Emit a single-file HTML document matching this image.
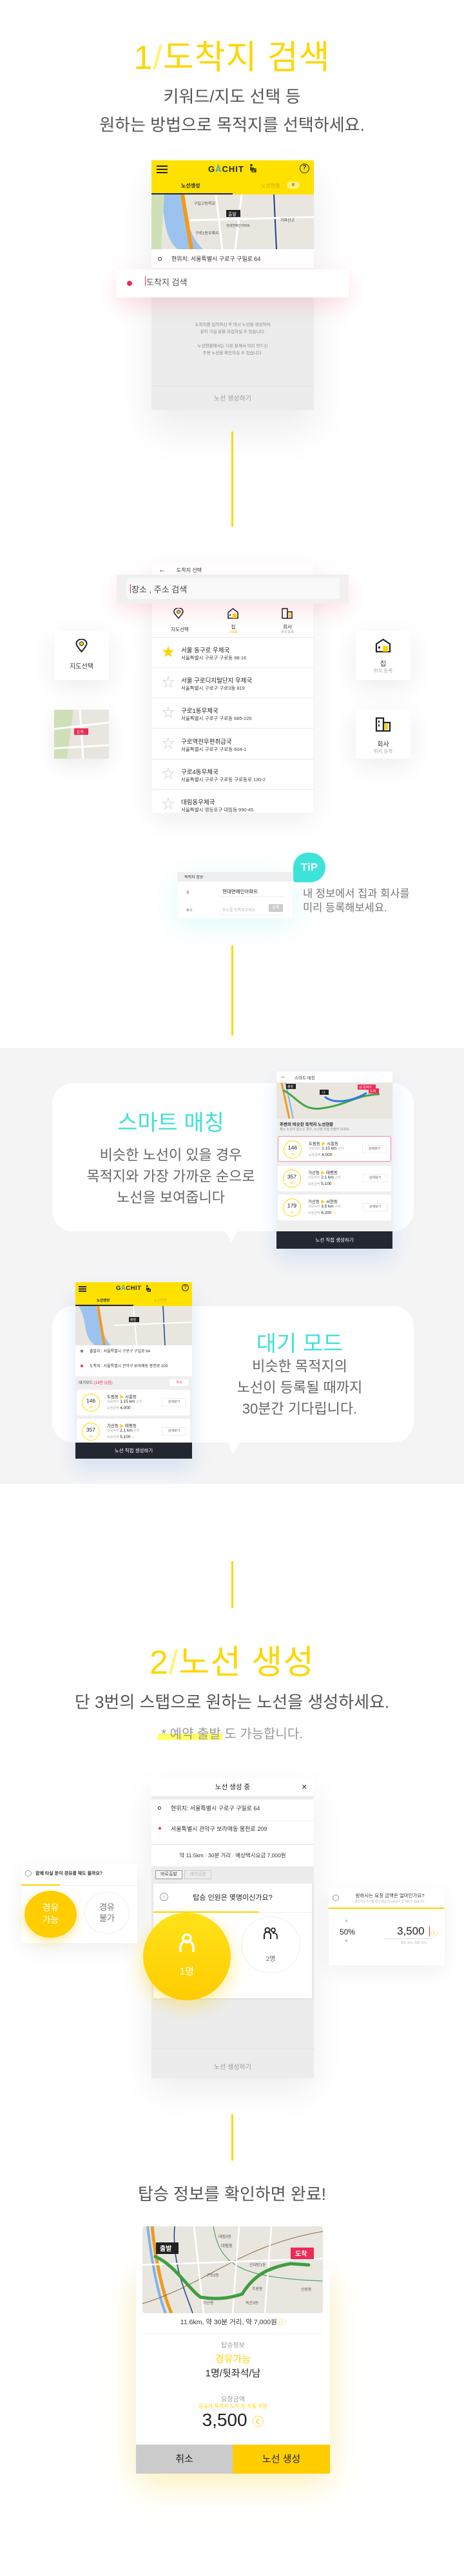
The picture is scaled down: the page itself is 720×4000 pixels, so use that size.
<!DOCTYPE html>
<html><head><meta charset="utf-8">
<style>
*{margin:0;padding:0;box-sizing:border-box}
body{width:720px;height:4000px;position:relative;background:#fff;font-family:"Liberation Sans","Noto Sans CJK KR",sans-serif;overflow:hidden;color:#333}
.a{position:absolute}
.c{text-align:center}
.title{position:absolute;left:0;width:720px;text-align:center;color:#ffd600;font-size:52px;line-height:60px;letter-spacing:1px}
.title .s{color:#fff36b}
.sub{position:absolute;left:0;width:720px;text-align:center;color:#555;font-size:26px;line-height:44px}
.vl{position:absolute;left:359px;width:3px;background:#ffd800}
.map{position:absolute;background:#e9e6e0;overflow:hidden}
.shadow{box-shadow:0 10px 40px rgba(0,0,0,.08)}
.ylw{background:#ffe100}
.item{position:absolute;left:0;width:250px;height:47px;border-bottom:2px solid #f2f2f2;background:#fff}
.item .n{position:absolute;left:45px;top:11px;font-size:9.5px;color:#222}
.item .d{position:absolute;left:45px;top:25px;font-size:7.5px;color:#444}
.item .st{position:absolute;left:15px;top:12px;font-size:20px;color:#ccc;line-height:20px}
.card{position:absolute;background:#fff}
.rc{position:absolute;left:2px;width:176px;height:40px;background:#fff;border-radius:3px}
.rc .cir{position:absolute;left:8px;top:6px;width:28px;height:28px;border:1.5px solid #ffd800;border-radius:50%;font-size:8.5px;text-align:center;line-height:11px;padding-top:5px;color:#222}
.rc .cir i{display:block;font-style:normal;color:#ffc800;font-size:6px}
.rc .t1{position:absolute;left:47px;top:5px;font-size:6.5px;color:#222}
.rc .t2{position:absolute;left:47px;top:15px;font-size:6.5px;color:#222}
.rc .t3{position:absolute;left:47px;top:25px;font-size:6.5px;color:#222}
.rc .t2 span,.rc .t3 span{color:#aaa;font-size:5px}
.rc .b{position:absolute;right:6px;top:13px;width:38px;height:13px;border:1px solid #eee;font-size:5px;text-align:center;line-height:11px;color:#555}
.bubble{position:absolute;background:#fff;border-radius:32px}
</style></head><body>

<!-- ===== Section 1 ===== -->
<div class="title" style="top:60px">1<span class="s">/</span>도착지 검색</div>
<div class="sub" style="top:128px">키워드/지도 선택 등<br>원하는 방법으로 목적지를 선택하세요.</div>

<div class="a shadow" style="left:235px;top:249px;width:252px;height:388px;background:#ececec;box-shadow:0 30px 60px rgba(0,0,0,.08)">
  <div class="a ylw" style="left:0;top:0;width:252px;height:53px"></div>
  <div class="a" style="left:8px;top:8px;width:17px;height:2px;background:#222;box-shadow:0 5px 0 #222,0 10px 0 #222"></div>
  <div class="a" style="left:88px;top:6px;font-size:13px;font-weight:bold;letter-spacing:1px;color:#222">G<span style="color:#3aa0e0">Å</span>CHIT</div>
  <svg class="a" style="left:152px;top:5px" width="12" height="14"><circle cx="3" cy="2.5" r="1.8" fill="#222"/><path d="M2 5 L2 10 L8 10 L10 13 M2 7 L7 7" stroke="#222" stroke-width="1.6" fill="none"/><rect x="4" y="8" width="6" height="5" fill="none" stroke="#222" stroke-width="1.2"/></svg>
  <div class="a" style="left:230px;top:5px;width:15px;height:15px;border:1.6px solid #222;border-radius:50%;font-size:10px;text-align:center;line-height:12px;font-weight:bold;color:#222">?</div>
  <div class="a" style="left:46px;top:34px;font-size:8px;font-weight:bold;color:#222">노선생성</div>
  <div class="a" style="left:0;top:51px;width:126px;height:2px;background:#222"></div>
  <div class="a" style="left:170px;top:34px;font-size:8px;color:#c9a800">노선현황</div>
  <div class="a" style="left:210px;top:33px;width:20px;height:11px;border-radius:6px;background:#fff07a;font-size:7px;text-align:center;line-height:11px">8</div>
  <div class="map" style="left:0;top:53px;width:252px;height:85px">
    <svg width="252" height="85"><path d="M10 0 C25 30 15 60 40 85 L80 85 C55 60 55 30 45 0Z" fill="#9cc3ef"/><path d="M0 0 L20 0 L15 85 L0 85Z" fill="#cfe0b8"/><path d="M48 0 L62 85" stroke="#f29a1c" stroke-width="6"/><path d="M190 0 L194 85" stroke="#1c3f8a" stroke-width="2"/><path d="M100 0 L110 85 M60 40 L252 35 M140 0 L130 85" stroke="#fff" stroke-width="3"/><rect x="116" y="24" width="22" height="11" fill="#222"/><text x="119" y="33" font-size="7" fill="#fff">출발</text><text x="66" y="16" font-size="6" fill="#444">구일고등학교</text><text x="68" y="62" font-size="6" fill="#444">구로1동우체국</text><text x="116" y="50" font-size="5" fill="#444">현대연예인아파트</text><text x="200" y="42" font-size="6" fill="#444">가마산고</text></svg>
  </div>
  <div class="a" style="left:0;top:138px;width:252px;height:30px;background:#fff"></div>
  <div class="a" style="left:10px;top:150px;width:6px;height:6px;border:1.3px solid #333;border-radius:50%"></div>
  <div class="a" style="left:31px;top:146px;font-size:9px;color:#333">현위치: 서울특별시 구로구 구일로 64</div>
  <div class="a c" style="left:0;top:250px;width:252px;font-size:6.5px;line-height:11px;color:#888">도착지를 입력하신 후 택시 노선을 생성하여<br>같이 가실 분을 모집하실 수 있습니다.<br><br>노선현황에서는 다른 분께서 이미 만드신<br>주변 노선을 확인하실 수 있습니다.</div>
  <div class="a" style="left:0;top:350px;width:252px;height:1px;background:#ddd"></div>
  <div class="a c" style="left:0;top:361px;width:252px;font-size:10px;color:#999">노선 생성하기</div>
</div>
<div class="a" style="left:181px;top:418px;width:360px;height:44px;background:#fff;box-shadow:0 12px 30px rgba(255,80,110,.18)">
  <div class="a" style="left:16px;top:18px;width:8px;height:8px;border-radius:50%;background:#ee2a55"></div>
  <div class="a" style="left:44px;top:11px;width:1px;height:15px;background:#ee2a55"></div>
  <div class="a" style="left:46px;top:10px;font-size:13px;color:#555">도착지 검색</div>
</div>
<div class="vl" style="top:670px;height:148px"></div>

<!-- ===== Section 1b ===== -->
<div class="a" style="left:236px;top:875px;width:250px;height:387px;background:#fff;box-shadow:0 10px 40px rgba(0,0,0,.07);overflow:hidden">
  <div class="a" style="left:10px;top:4px;font-size:11px;color:#222">←</div>
  <div class="a" style="left:38px;top:5px;font-size:8px;color:#333">도착지 선택</div>
  <div class="a" style="left:0;top:63px;width:250px;height:53px;border-bottom:2px solid #f2f2f2"></div>
  <svg class="a" style="left:33px;top:69px" width="16" height="18"><path d="M8 16 C3 10 1 8 1 6 A7 6 0 0 1 15 6 C15 8 13 10 8 16Z" fill="none" stroke="#222" stroke-width="1.6"/><circle cx="8" cy="6" r="2.5" fill="#ffd400" stroke="#222"/></svg>
  <div class="a c" style="left:18px;top:97px;width:50px;font-size:7.5px;color:#333">지도선택</div>
  <svg class="a" style="left:116px;top:68px" width="19" height="18"><path d="M2 8 L9.5 2 L17 8 L17 17 L2 17Z" fill="none" stroke="#222" stroke-width="1.6"/><rect x="9" y="10" width="6" height="7" fill="#ffd400"/><rect x="4" y="11" width="2" height="2" fill="#222"/></svg>
  <div class="a c" style="left:101px;top:93px;width:50px;font-size:7.5px;color:#333">집</div>
  <div class="a c" style="left:101px;top:103px;width:50px;font-size:5px;color:#f0b800">구로동</div>
  <svg class="a" style="left:200px;top:68px" width="19" height="18"><rect x="2" y="2" width="8" height="15" fill="none" stroke="#222" stroke-width="1.6"/><rect x="10" y="7" width="7" height="10" fill="none" stroke="#222" stroke-width="1.6"/><rect x="12" y="9" width="3" height="6" fill="#ffd400"/></svg>
  <div class="a c" style="left:185px;top:93px;width:50px;font-size:7.5px;color:#333">회사</div>
  <div class="a c" style="left:185px;top:103px;width:50px;font-size:5px;color:#999">위치 등록</div>
  <div class="item" style="top:116px"><div class="st" style="color:#ffd200">★</div><div class="n">서울 동구로 우체국</div><div class="d">서울특별시 구로구 구로동 98-16</div></div>
  <div class="item" style="top:163px"><div class="st">☆</div><div class="n">서울 구로디지털단지 우체국</div><div class="d">서울특별시 구로구 구로3동 819</div></div>
  <div class="item" style="top:210px"><div class="st">☆</div><div class="n">구로1동우체국</div><div class="d">서울특별시 구로구 구로동 685-220</div></div>
  <div class="item" style="top:258px"><div class="st">☆</div><div class="n">구로역전우편취급국</div><div class="d">서울특별시 구로구 구로동 604-1</div></div>
  <div class="item" style="top:305px"><div class="st">☆</div><div class="n">구로4동우체국</div><div class="d">서울특별시 구로구 구로동 구로동로 130-2</div></div>
  <div class="item" style="top:352px"><div class="st">☆</div><div class="n">대림동우체국</div><div class="d">서울특별시 영등포구 대림동 990-45</div></div>
</div>
<div class="a" style="left:181px;top:892px;width:360px;height:45px;background:#f0f0f0;box-shadow:0 12px 30px rgba(255,80,110,.16)">
  <div class="a" style="left:15px;top:6px;width:331px;height:32px;background:#f9f9f9;border-radius:4px"></div>
  <div class="a" style="left:21px;top:15px;width:1px;height:14px;background:#ee2a55"></div>
  <div class="a" style="left:23px;top:13px;font-size:13px;color:#444">장소 , 주소 검색</div>
</div>
<div class="card shadow" style="left:84px;top:980px;width:85px;height:76px">
  <svg class="a" style="left:33px;top:12px" width="19" height="22"><path d="M9.5 20 C4 13 1.5 10 1.5 7.5 A8 7 0 0 1 17.5 7.5 C17.5 10 15 13 9.5 20Z" fill="none" stroke="#222" stroke-width="2"/><circle cx="9.5" cy="7.5" r="3" fill="#ffd400" stroke="#222"/></svg>
  <div class="a c" style="left:0;top:46px;width:85px;font-size:10px;color:#333">지도선택</div>
</div>
<div class="map" style="left:84px;top:1102px;width:85px;height:76px;box-shadow:0 10px 30px rgba(0,0,0,.08)">
  <svg width="85" height="76"><path d="M0 0 L30 0 L20 76 L0 76Z" fill="#cfe0b8"/><path d="M0 30 L85 20 M40 0 L45 76 M0 60 L85 55" stroke="#fff" stroke-width="3"/><rect x="31" y="29" width="22" height="10" fill="#ee2a55"/><text x="35" y="37" font-size="6" fill="#fff">도착</text></svg>
</div>
<div class="card shadow" style="left:552px;top:980px;width:85px;height:76px">
  <svg class="a" style="left:30px;top:11px" width="25" height="22"><path d="M2 9 L12.5 2 L23 9 L23 21 L2 21Z" fill="none" stroke="#222" stroke-width="2.2"/><rect x="12" y="12" width="8" height="9" fill="#ffd400"/><rect x="5" y="13" width="3" height="3" fill="#222"/></svg>
  <div class="a c" style="left:0;top:42px;width:85px;font-size:10px;color:#333">집</div>
  <div class="a c" style="left:0;top:56px;width:85px;font-size:7.5px;color:#aaa">위치 등록</div>
</div>
<div class="card shadow" style="left:552px;top:1102px;width:85px;height:76px">
  <svg class="a" style="left:30px;top:11px" width="26" height="24"><rect x="2" y="2" width="11" height="20" fill="none" stroke="#222" stroke-width="2.2"/><rect x="13" y="9" width="10" height="13" fill="none" stroke="#222" stroke-width="2.2"/><rect x="15" y="11" width="5" height="9" fill="#ffd400"/><rect x="5" y="6" width="2" height="3" fill="#222"/><rect x="5" y="12" width="2" height="3" fill="#222"/></svg>
  <div class="a c" style="left:0;top:45px;width:85px;font-size:10px;color:#333">회사</div>
  <div class="a c" style="left:0;top:59px;width:85px;font-size:7.5px;color:#aaa">위치 등록</div>
</div>
<div class="a" style="left:275px;top:1354px;width:179px;height:72px;background:#fff;box-shadow:0 10px 40px rgba(60,230,220,.18)">
  <div class="a" style="left:0;top:0;width:179px;height:15px;background:#efefef"></div>
  <div class="a" style="left:11px;top:3px;font-size:6px;color:#333">목적지 정보</div>
  <div class="a" style="left:14px;top:28px;font-size:5px;color:#555">집</div>
  <div class="a" style="left:70px;top:25px;font-size:7.5px;color:#222">현대연예인아파트</div>
  <div class="a" style="left:64px;top:38px;width:100px;height:1px;background:#eee"></div>
  <div class="a" style="left:14px;top:56px;font-size:5px;color:#555">회사</div>
  <div class="a" style="left:70px;top:54px;font-size:6px;color:#bbb">주소를 등록해주세요</div>
  <div class="a" style="left:142px;top:50px;width:22px;height:12px;background:#ccc;font-size:6px;color:#fff;text-align:center;line-height:12px">등록</div>
  <div class="a" style="left:64px;top:66px;width:100px;height:1px;background:#eee"></div>
</div>
<div class="a" style="left:455px;top:1324px;width:50px;height:46px;background:#3de3d8;border-radius:24px 24px 24px 4px;color:#fff;font-size:17px;font-weight:bold;text-align:center;line-height:46px">TiP</div>
<div class="a" style="left:470px;top:1377px;font-size:16.5px;line-height:22px;color:#777">내 정보에서 집과 회사를<br>미리 등록해보세요.</div>
<div class="vl" style="top:1468px;height:140px"></div>

<!-- ===== Section gray ===== -->
<div class="a" style="left:0;top:1627px;width:720px;height:677px;background:#f4f4f5"></div>
<div class="bubble" style="left:81px;top:1682px;width:561px;height:230px"></div>
<div class="a" style="left:349px;top:1910px;width:0;height:0;border-left:10px solid transparent;border-right:10px solid transparent;border-top:20px solid #fff"></div>
<div class="a c" style="left:115px;top:1716px;width:300px;font-size:34px;color:#3fe0d8">스마트 매칭</div>
<div class="a c" style="left:115px;top:1777px;width:300px;font-size:22px;line-height:33px;color:#666">비슷한 노선이 있을 경우<br>목적지와 가장 가까운 순으로<br>노선을 보여줍니다</div>

<div class="a" style="left:429px;top:1664px;width:180px;height:275px;background:#efefef;box-shadow:0 16px 30px rgba(90,150,230,.2)">
  <div class="a" style="left:0;top:0;width:180px;height:17px;background:#fff"></div>
  <div class="a" style="left:6px;top:2px;font-size:9px;color:#222">←</div>
  <div class="a" style="left:28px;top:4px;font-size:6.5px;color:#444">스마트 매칭</div>
  <div class="map" style="left:0;top:17px;width:180px;height:56px">
    <svg width="180" height="56"><path d="M8 0 L20 56" stroke="#f29a1c" stroke-width="3"/><path d="M14 0 L26 56" stroke="#7fb3ea" stroke-width="2"/><path d="M10 12 C30 20 40 45 70 40 C110 35 120 20 160 18" stroke="#44a646" stroke-width="3" fill="none"/><path d="M75 22 C90 35 120 28 140 16" stroke="#2d78e8" stroke-width="3" fill="none"/><rect x="15" y="2" width="15" height="8" fill="#222"/><text x="17" y="8" font-size="5" fill="#fff">출발</text><rect x="67" y="11" width="14" height="8" fill="#222"/><text x="71" y="17" font-size="5" fill="#fff">나</text><rect x="126" y="3" width="28" height="8" fill="#ee2a55"/><text x="128" y="9" font-size="5" fill="#fff">내 목적지</text><rect x="143" y="9" width="16" height="8" fill="#ee2a55"/><text x="145" y="15" font-size="5" fill="#fff">도착</text></svg>
  </div>
  <div class="a" style="left:5px;top:76px;font-size:6.5px;font-weight:bold;color:#222">주변의 비슷한 목적지 노선현황</div>
  <div class="a" style="left:5px;top:86px;font-size:5px;color:#888">찾는 노선이 없으신 경우, 노선을 직접 만들어 보세요.</div>
  <div class="rc" style="top:100px;border:1px solid #f58aa3"><div class="cir">146<i>m</i></div><div class="t1">도림동 <span style="color:#ffc800">▶</span> 시흥동</div><div class="t2"><span>내목적지</span> 1.15 km <span>근처</span></div><div class="t3"><span>요청금액</span> 4,000 <span style="color:#ffc800">ⓒ</span></div><div class="b">상세보기</div></div>
  <div class="rc" style="top:146px"><div class="cir">357<i>m</i></div><div class="t1">가산동 <span style="color:#ffc800">▶</span> 태평동</div><div class="t2"><span>내목적지</span> 2.1 km <span>근처</span></div><div class="t3"><span>요청금액</span> 5,100 <span style="color:#ffc800">ⓒ</span></div><div class="b">상세보기</div></div>
  <div class="rc" style="top:191px"><div class="cir">179<i>m</i></div><div class="t1">가산동 <span style="color:#ffc800">▶</span> 서현동</div><div class="t2"><span>내목적지</span> 3.5 km <span>근처</span></div><div class="t3"><span>요청금액</span> 6,200 <span style="color:#ffc800">ⓒ</span></div><div class="b">상세보기</div></div>
  <div class="a c" style="left:0;top:248px;width:180px;height:27px;background:#232830;color:#fff;font-size:7.5px;line-height:27px">노선 직접 생성하기</div>
</div>

<div class="bubble" style="left:81px;top:2028px;width:561px;height:212px"></div>
<div class="a" style="left:352px;top:2238px;width:0;height:0;border-left:10px solid transparent;border-right:10px solid transparent;border-top:20px solid #fff"></div>
<div class="a c" style="left:315px;top:2059px;width:300px;font-size:34px;color:#3fe0d8">대기 모드</div>
<div class="a c" style="left:315px;top:2105px;width:300px;font-size:22px;line-height:33px;color:#666">비슷한 목적지의<br>노선이 등록될 때까지<br>30분간 기다립니다.</div>

<div class="a" style="left:117px;top:1991px;width:181px;height:274px;background:#efefef;box-shadow:0 16px 30px rgba(90,150,230,.2);overflow:hidden">
  <div class="a ylw" style="left:0;top:0;width:181px;height:37px"></div>
  <div class="a" style="left:5px;top:6px;width:12px;height:1.5px;background:#222;box-shadow:0 3.5px 0 #222,0 7px 0 #222"></div>
  <div class="a" style="left:63px;top:4px;font-size:9.5px;font-weight:bold;color:#222;letter-spacing:.5px">G<span style="color:#3aa0e0">Å</span>CHIT</div>
  <svg class="a" style="left:109px;top:4px" width="9" height="11"><circle cx="2.3" cy="2" r="1.4" fill="#222"/><path d="M1.5 4 L1.5 8 L6 8 L7.5 10.5 M1.5 5.5 L5.5 5.5" stroke="#222" stroke-width="1.2" fill="none"/><rect x="3" y="6.5" width="4.5" height="4" fill="none" stroke="#222" stroke-width="1"/></svg>
  <div class="a" style="left:165px;top:3px;width:11px;height:11px;border:1.3px solid #222;border-radius:50%;font-size:7px;text-align:center;line-height:9px;font-weight:bold">?</div>
  <div class="a" style="left:33px;top:24px;font-size:5.5px;font-weight:bold;color:#222">노선생성</div>
  <div class="a" style="left:0;top:35px;width:90px;height:1.5px;background:#222"></div>
  <div class="a" style="left:122px;top:24px;font-size:5.5px;color:#c9a800">노선현황</div>
  <div class="map" style="left:0;top:37px;width:181px;height:61px">
    <svg width="181" height="61"><path d="M5 0 C20 25 10 45 30 61 L55 61 C40 45 40 25 32 0Z" fill="#9cc3ef"/><path d="M35 0 L45 61" stroke="#f29a1c" stroke-width="4"/><path d="M136 0 L139 61" stroke="#1c3f8a" stroke-width="1.5"/><path d="M60 30 L181 25 M90 0 L95 61" stroke="#fff" stroke-width="2"/><rect x="83" y="17" width="16" height="8" fill="#222"/><text x="85" y="23" font-size="5" fill="#fff">출발</text></svg>
  </div>
  <div class="a" style="left:0;top:98px;width:181px;height:48px;background:#fff"></div>
  <div class="a" style="left:8px;top:105px;width:4px;height:4px;border:1px solid #333;border-radius:50%"></div>
  <div class="a" style="left:22px;top:102px;font-size:6px;color:#333">출발지 : 서울특별시 구로구 구일로 64</div>
  <div class="a" style="left:8px;top:128px;width:4px;height:4px;background:#ee2a55;border-radius:50%"></div>
  <div class="a" style="left:22px;top:125px;font-size:6px;color:#333">도착지 : 서울특별시 관악구 보라매동 봉천로 209</div>
  <div class="a" style="left:5px;top:151px;font-size:6px;color:#333">대기모드 <span style="color:#ee2a55">(14분 남음)</span></div>
  <div class="a" style="left:146px;top:151px;width:30px;height:10px;background:#fff;font-size:5px;color:#ee2a55;text-align:center;line-height:10px">취소</div>
  <div class="rc" style="top:167px;left:2px"><div class="cir">146<i>m</i></div><div class="t1">도림동 <span style="color:#ffc800">▶</span> 시흥동</div><div class="t2"><span>내목적지</span> 1.15 km <span>근처</span></div><div class="t3"><span>요청금액</span> 4,000 <span style="color:#ffc800">ⓒ</span></div><div class="b">상세보기</div></div>
  <div class="rc" style="top:212px;left:2px"><div class="cir">357<i>m</i></div><div class="t1">가산동 <span style="color:#ffc800">▶</span> 태평동</div><div class="t2"><span>내목적지</span> 2.1 km <span>근처</span></div><div class="t3"><span>요청금액</span> 5,100 <span style="color:#ffc800">ⓒ</span></div><div class="b">상세보기</div></div>
  <div class="a c" style="left:0;top:249px;width:181px;height:25px;background:#232830;color:#fff;font-size:7.5px;line-height:25px">노선 직접 생성하기</div>
</div>

<!-- ===== Section 2 ===== -->
<div class="vl" style="top:2424px;height:73px"></div>
<div class="title" style="top:2552px">2<span class="s">/</span>노선 생성</div>
<div class="sub" style="top:2621px">단 3번의 스탭으로 원하는 노선을 생성하세요.</div>
<div class="a" style="left:245px;top:2692px;width:100px;height:10px;background:#ffff66"></div>
<div class="a c" style="left:0;top:2676px;width:720px;font-size:20px;color:#999">* 예약 출발 도 가능합니다.</div>

<div class="a" style="left:235px;top:2761px;width:252px;height:466px;background:#ececec;box-shadow:0 20px 50px rgba(0,0,0,.07)">
  <div class="a c" style="left:0;top:0;width:252px;height:28px;background:#fff;font-size:10.5px;line-height:28px;color:#222">노선 생성 중</div>
  <div class="a" style="left:233px;top:5px;font-size:14px;color:#222">×</div>
  <div class="a" style="left:0;top:33px;width:252px;height:69px;background:#fff"></div>
  <div class="a" style="left:10px;top:44px;width:5px;height:5px;border:1.2px solid #333;border-radius:50%"></div>
  <div class="a" style="left:30px;top:40px;font-size:9px;color:#333">현위치: 서울특별시 구로구 구일로 64</div>
  <div class="a" style="left:28px;top:66px;width:224px;height:1px;background:#f0f0f0"></div>
  <div class="a" style="left:11px;top:76px;width:4px;height:4px;background:#ee2a55;border-radius:50%"></div>
  <div class="a" style="left:30px;top:72px;font-size:9px;color:#333">서울특별시 관악구 보라매동 봉천로 209</div>
  <div class="a c" style="left:0;top:104px;width:252px;height:33px;background:#fff;font-size:8.5px;line-height:33px;color:#333">약 11.5km <span style="color:#ccc">/</span> 30분 거리 <span style="color:#ccc">/</span> 예상택시요금 7,000원</div>
  <div class="a" style="left:6px;top:143px;width:42px;height:14px;border:1px solid #999;background:#f5f5f5;font-size:7px;text-align:center;line-height:12px;color:#444">바로출발</div>
  <div class="a" style="left:51px;top:143px;width:42px;height:14px;border:1px solid #ccc;font-size:7px;text-align:center;line-height:12px;color:#bbb">예약출발</div>
  <div class="a" style="left:3px;top:164px;width:246px;height:178px;background:#fff;box-shadow:0 1px 3px rgba(0,0,0,.08)">
    <div class="a" style="left:10px;top:14px;width:13px;height:13px;border:1px solid #999;border-radius:50%;font-size:7px;text-align:center;line-height:11px;color:#666">‹</div>
    <div class="a c" style="left:0;top:13px;width:246px;font-size:11px;color:#222">탑승 인원은 몇명이신가요?</div>
    <div class="a" style="left:0;top:44px;width:246px;height:1px;background:#eee"></div>
    <div class="a" style="left:0;top:43px;width:164px;height:2px;background:#ffd200"></div>
    <div class="a" style="left:136px;top:51px;width:92px;height:88px;border:1px solid #eee;border-radius:50%"></div>
    <svg class="a" style="left:171px;top:67px" width="22" height="20"><circle cx="6" cy="5" r="3.5" fill="none" stroke="#222" stroke-width="2"/><path d="M1 19 L1 13 A5 5 0 0 1 11 13 L11 19" fill="none" stroke="#222" stroke-width="2"/><circle cx="15" cy="5" r="3" fill="none" stroke="#222" stroke-width="1.8"/><path d="M14 10 A5 5 0 0 1 21 14 L21 19" fill="none" stroke="#222" stroke-width="1.8"/></svg>
    <div class="a c" style="left:136px;top:108px;width:92px;font-size:10px;color:#666">2명</div>
  </div>
  <div class="a c" style="left:0;top:420px;width:252px;height:1px;background:#ddd"></div>
  <div class="a c" style="left:0;top:440px;width:252px;font-size:10px;color:#999">노선 생성하기</div>
</div>
<div class="a" style="left:222px;top:2970px;width:136px;height:136px;border-radius:50%;background:linear-gradient(#ffe21a,#ffcc00);box-shadow:0 10px 30px rgba(255,210,0,.4)">
  <svg class="a" style="left:55px;top:32px" width="26" height="30"><circle cx="13" cy="8" r="6" fill="none" stroke="#fff" stroke-width="3.5"/><path d="M3 29 L3 21 A10 9 0 0 1 23 21 L23 29" fill="none" stroke="#fff" stroke-width="3.5"/></svg>
  <div class="a c" style="left:0;top:80px;width:136px;font-size:15px;color:#fff">1명</div>
</div>
<div class="a" style="left:33px;top:2895px;width:180px;height:122px;background:#fff;box-shadow:0 10px 30px rgba(0,0,0,.06)">
  <div class="a" style="left:6px;top:9px;width:10px;height:10px;border:1px solid #999;border-radius:50%"></div>
  <div class="a" style="left:22px;top:9px;font-size:7px;font-weight:bold;color:#333">함께 타실 분이 경유를 해도 될까요?</div>
  <div class="a" style="left:0;top:32px;width:180px;height:1px;background:#eee"></div>
  <div class="a" style="left:0;top:31px;width:60px;height:2px;background:#ffd200"></div>
  <div class="a" style="left:5px;top:41px;width:81px;height:73px;border-radius:50%;background:#ffcd00;box-shadow:0 6px 16px rgba(255,200,0,.4);color:#fff;font-size:14px;text-align:center;line-height:19px;padding-top:17px">경유<br>가능</div>
  <div class="a" style="left:98px;top:43px;width:70px;height:65px;border-radius:50%;border:1px solid #eee;color:#777;font-size:13px;text-align:center;line-height:17px;padding-top:14px">경유<br>불가</div>
</div>
<div class="a" style="left:510px;top:2931px;width:180px;height:121px;background:#fff;box-shadow:0 10px 30px rgba(0,0,0,.06)">
  <div class="a" style="left:6px;top:11px;width:10px;height:10px;border:1px solid #999;border-radius:50%"></div>
  <div class="a c" style="left:10px;top:7px;width:170px;font-size:7.5px;color:#333">원하시는 요청 금액은 얼마인가요?</div>
  <div class="a c" style="left:10px;top:19px;width:170px;font-size:4.5px;color:#aaa">경유지가 추가될 경우 예상 택시요금이 증가될 수 있습니다.</div>
  <div class="a" style="left:0;top:31px;width:180px;height:2px;background:#ffd200"></div>
  <div class="a" style="left:24px;top:48px;font-size:7px;color:#bbb">▲</div>
  <div class="a" style="left:17px;top:62px;font-size:12px;color:#222">50%</div>
  <div class="a" style="left:24px;top:80px;font-size:7px;color:#bbb">▼</div>
  <div class="a" style="left:106px;top:58px;font-size:17px;color:#222">3,500</div>
  <div class="a" style="left:156px;top:60px;width:1px;height:16px;background:#ee2a55"></div>
  <div class="a" style="left:159px;top:63px;font-size:10px;color:#ffc800">ⓒ</div>
  <div class="a" style="left:85px;top:79px;width:75px;height:1px;background:#ddd"></div>
  <div class="a" style="left:112px;top:83px;font-size:4.5px;color:#aaa">최소 40%, 최대 70%</div>
</div>

<div class="vl" style="top:3283px;height:72px"></div>
<div class="a c" style="left:0;top:3387px;width:720px;font-size:26px;color:#555">탑승 정보를 확인하면 완료!</div>

<div class="a" style="left:211px;top:3525px;width:301px;height:316px;background:#fff;box-shadow:0 20px 50px rgba(255,215,0,.25),0 0 40px rgba(0,0,0,.04)"></div>
<div class="map" style="left:221px;top:3457px;width:280px;height:135px;border-radius:4px">
  <svg width="280" height="135"><path d="M15 0 C20 50 30 100 45 135" stroke="#f29a1c" stroke-width="5" fill="none"/><path d="M8 0 C14 50 22 100 36 135" stroke="#7fb3ea" stroke-width="4" fill="none"/><path d="M50 0 C45 60 70 110 78 135" stroke="#1c3f8a" stroke-width="1.5" fill="none"/><path d="M110 0 C120 60 150 80 280 85" stroke="#2a9c5a" stroke-width="1" fill="none"/><path d="M0 120 C100 90 150 30 280 8" stroke="#8a6a3a" stroke-width="1" fill="none"/><path d="M80 0 L95 135 M150 0 L140 135 M0 60 L280 50 M200 0 L190 135" stroke="#fff" stroke-width="2.5"/><path d="M20 47 C50 60 70 95 90 110 C120 115 140 110 155 105 C170 80 190 65 230 58 L258 60" stroke="#3f9e3f" stroke-width="5" fill="none" stroke-linecap="round"/><rect x="21" y="25" width="35" height="18" fill="#222" rx="1"/><text x="27" y="38" font-size="10" fill="#fff" font-weight="bold">출발</text><rect x="230" y="33" width="36" height="18" fill="#ee2a55" rx="1"/><text x="237" y="46" font-size="10" fill="#fff" font-weight="bold">도착</text><text x="118" y="18" font-size="6" fill="#555">대림3동</text><text x="122" y="32" font-size="6.5" fill="#555">대림동</text><text x="166" y="62" font-size="6" fill="#555">신대방1동</text><text x="99" y="78" font-size="6" fill="#555">구로3동</text><text x="170" y="99" font-size="6" fill="#555">조원동</text><text x="160" y="121" font-size="6" fill="#555">독산3동</text><text x="94" y="121" font-size="6" fill="#555">가산동</text><text x="246" y="100" font-size="6" fill="#555">신원동</text></svg>
</div>
<div class="a c" style="left:211px;top:3598px;width:301px;font-size:10.5px;color:#333">11.6km, 약 30분 거리, 약 7,000원 <span style="color:#ffc800">ⓘ</span></div>
<div class="a" style="left:221px;top:3623px;width:280px;height:1px;background:#f0f0f0"></div>
<div class="a c" style="left:211px;top:3633px;width:301px;font-size:10px;color:#999">탑승정보</div>
<div class="a c" style="left:211px;top:3652px;width:301px;font-size:15px;color:#ffd200">경유가능</div>
<div class="a c" style="left:211px;top:3674px;width:301px;font-size:15px;color:#222">1명/뒷좌석/남</div>
<div class="a c" style="left:211px;top:3717px;width:301px;font-size:10px;color:#999">요청금액</div>
<div class="a c" style="left:211px;top:3731px;width:301px;font-size:8px;color:#ffd200">동승자 목적지 도착 후 자동 적립</div>
<div class="a c" style="left:211px;top:3742px;width:301px;font-size:28px;color:#222">3,500 <span style="color:#ffc800;font-size:18px">ⓒ</span></div>
<div class="a c" style="left:211px;top:3796px;width:150px;height:45px;background:#cbcbcb;font-size:15px;line-height:45px;color:#222">취소</div>
<div class="a c" style="left:361px;top:3796px;width:151px;height:45px;background:#ffcd00;font-size:15px;line-height:45px;color:#222">노선 생성</div>

</body></html>
